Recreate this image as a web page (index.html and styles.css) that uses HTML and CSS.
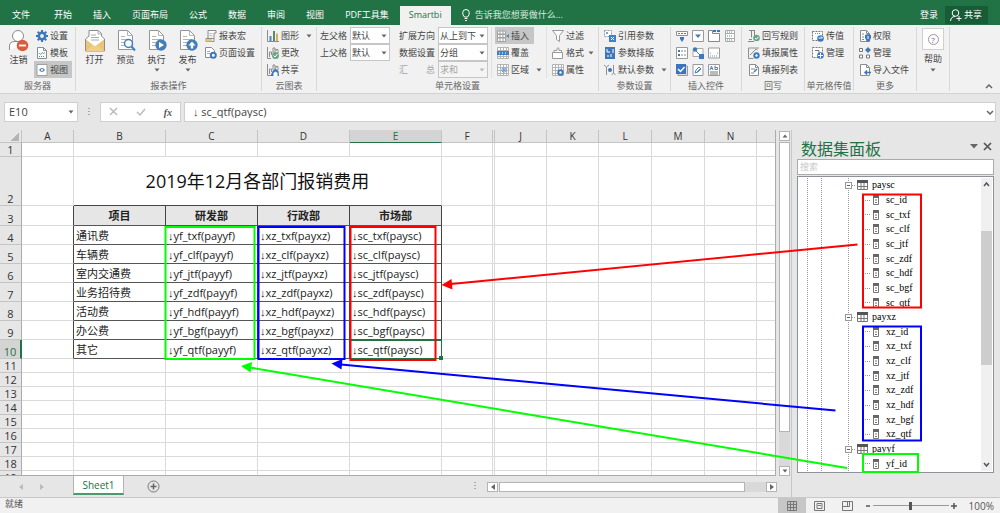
FILE: index.html
```html
<!DOCTYPE html>
<html lang="zh-CN">
<head>
<meta charset="utf-8">
<title>Smartbi - Sheet1</title>
<link rel="stylesheet" href="styles.css">
</head>
<body>
<svg class="defs" aria-hidden="true">
  <symbol id="user" viewBox="0 0 20 22"><circle cx="9" cy="6" r="5.5" fill="#fff" stroke="#8a8a8a"/><path d="M.5 20V16Q.5 11.500 6 11.500H12Q15 11.500 16 14" fill="#fff" stroke="#8a8a8a"/><circle cx="13.500" cy="15.500" r="5.800" fill="#dc5b3c"/><path d="M10 15.500h7" stroke="#fff" stroke-width="1.800"/></symbol>
  <symbol id="gear" viewBox="0 0 12 12"><circle cx="6" cy="6" r="3.200" fill="none" stroke="#3f78ba" stroke-width="2.600"/><path d="M6 0v2M6 10v2M0 6h2M10 6h2M1.700 1.700l1.500 1.500M8.800 8.800l1.500 1.500M1.700 10.300l1.500-1.500M8.800 3.200l1.500-1.500" stroke="#3f78ba" stroke-width="2"/></symbol>
  <symbol id="page" viewBox="0 0 12 12"><path d="M1.500.5h6l3 3v8h-9z" fill="#fff" stroke="#8c8c8c"/><path d="M7.500.5v3h3" fill="none" stroke="#8c8c8c"/></symbol>
  <symbol id="template" viewBox="0 0 12 12"><use href="#page"/><path d="M3 6l1.500 1.500L6 5.500l1.500 1 1.500-1" fill="none" stroke="#65a794"/><path d="M3 9.500h6" stroke="#4c86c6" stroke-dasharray="1 1"/></symbol>
  <symbol id="view" viewBox="0 0 12 12"><path d="M1 .5h10v11H1z" fill="#fff" stroke="#a0a0a0"/><path d="M3 6q3-4 6 0q-3 4-6 0z" fill="#4c86c6"/><circle cx="6" cy="6" r="1.100" fill="#fff"/></symbol>
  <symbol id="open" viewBox="0 0 20 22"><path d="M.5 9L4 6v-5.500h9l3.500 3V6L19.500 9v12H.5z" fill="#fff" stroke="#8c8c8c"/><path d="M13 .5v3.500h3.500M6 5h5M6 7.500h8M6 10h8" fill="none" stroke="#aaa"/><path d="M1 9.500l9 7 9-7v11.500H1z" fill="#eac477"/><path d="M1 21l7-6 2 1.500 2-1.500 7 6" fill="#f1cf89"/></symbol>
  <symbol id="doc" viewBox="0 0 20 22"><path d="M2.500.5h9l5 5v14h-14z" fill="#fff" stroke="#959595"/><path d="M11.500.5v5h5M5 6.500h4M5 9.500h9M5 12.500h8M5 15.500h5" fill="none" stroke="#b4b4b4"/></symbol>
  <symbol id="preview" viewBox="0 0 20 22"><use href="#doc"/><circle cx="12.500" cy="13.500" r="4" fill="#fff" stroke="#3f7fc2" stroke-width="1.500"/><path d="M15.500 16.500l3.500 4" stroke="#3f7fc2" stroke-width="2"/></symbol>
  <symbol id="run" viewBox="0 0 20 22"><use href="#doc"/><circle cx="14" cy="15" r="5.700" fill="#437eb9"/><path d="M12 12v6l5-3z" fill="#fff"/></symbol>
  <symbol id="publish" viewBox="0 0 20 22"><use href="#doc"/><circle cx="14" cy="15" r="5.700" fill="#437eb9"/><path d="M14 11.500l3.500 4h-2.300v3h-2.400v-3h-2.300z" fill="#fff"/></symbol>
  <symbol id="scroll" viewBox="0 0 12 12"><path d="M3 .5h8v2.500H9v5M3 .5v8M9 8v3.500H1V8.500h8" fill="#fff" stroke="#8c8c8c"/><path d="M4.500 3.500h3M4.500 5.500h3" stroke="#e0b774"/><path d="M1 9h6v2.500H1z" fill="#eac477"/></symbol>
  <symbol id="pageset" viewBox="0 0 12 12"><path d="M.5.5h6l3 3v7h-9z" fill="#fff" stroke="#8c8c8c"/><path d="M2 4.500h3M2 6.500h3" stroke="#aaa"/><circle cx="8.300" cy="8.300" r="2.500" fill="#fff" stroke="#3f78ba" stroke-width="2"/></symbol>
  <symbol id="chart" viewBox="0 0 12 12"><path d="M.5 0v11.500H12" fill="none" stroke="#8c8c8c"/><path d="M2.500 6h2v5h-2z" fill="#4c86c6"/><path d="M6 1h2v10H6z" fill="#528b6e"/><path d="M9 3.500h2v7.500H9z" fill="#e0a95b"/></symbol>
  <symbol id="chartb" viewBox="0 0 12 12"><path d="M.5 0v11.500H4M2.500 10V5h2v3M6 6V1h2v4M9 4V2.500h2V6" fill="none" stroke="#8c8c8c"/></symbol>
  <symbol id="chartok" viewBox="0 0 12 12"><use href="#chartb"/><circle cx="8.500" cy="8.500" r="3.500" fill="#6aa588"/><path d="M6.500 8.500l1.500 1.500 2.500-3" fill="none" stroke="#fff"/></symbol>
  <symbol id="chartup" viewBox="0 0 12 12"><use href="#chartb"/><path d="M3.500 12l2-5 3-2.500 3 2.500.5 5z" fill="#3f78ba"/><path d="M6.500 12V9l2-1.500L10.500 9v3" fill="#fff"/></symbol>
  <symbol id="grid" viewBox="0 0 12 12"><path d="M.5.5h11v11H.5zM.5 3.500h11M.5 6.500h11M.5 9.500h11M3.500.5v11M6.500.5v11M9.500.5v11" fill="#fff" stroke="#b4b4b4"/></symbol>
  <symbol id="insert" viewBox="0 0 12 12"><path d="M.5 1h8v3h-8zM.5 4.500h8v3h-8zM.5 8h8v3.500h-8zM3 1v10M6 1v10" fill="#fff" stroke="#a0a0a0"/><path d="M9 6l3-2v4z" fill="#4c86c6"/></symbol>
  <symbol id="cover" viewBox="0 0 12 12"><use href="#grid"/><path d="M0 4h12v4H0z" fill="#4280c4"/><path d="M2 6h8" stroke="#fff" stroke-dasharray="1 2"/></symbol>
  <symbol id="area" viewBox="0 0 12 12"><use href="#grid"/><path d="M5 4l4 4M9 4L5 8M7 3v6M4 6h6" stroke="#6ba3dc"/></symbol>
  <symbol id="prop" viewBox="0 0 12 12"><use href="#grid"/><circle cx="8.500" cy="8.500" r="2.200" fill="#fff" stroke="#3f78ba" stroke-width="2"/></symbol>
  <symbol id="filter" viewBox="0 0 12 12"><path d="M.5.5h11L7.500 5.500v6l-3-2v-4z" fill="#fff" stroke="#999"/></symbol>
  <symbol id="format" viewBox="0 0 12 12"><path d="M.5 5.500h10v6H.5zM2 5.500V3.500h3V1.500Q6 0 7 1.500v2h2.500v2" fill="#fff" stroke="#999"/></symbol>
  <symbol id="ref" viewBox="0 0 12 12"><path d="M.5.500h7v6h-7z" fill="#fff" stroke="#999" stroke-dasharray="2 1"/><path d="M3 2v2M2 3h2" stroke="#4c86c6"/><path d="M5 5h7v7H5z" fill="#4280c4"/><path d="M7 7l3 3M10 7l-3 3" stroke="#fff"/></symbol>
  <symbol id="arrange" viewBox="0 0 12 12"><path d="M1 0h10v12H1z" fill="#3f78ba"/><path d="M3 2v3h3M3 9h2M7 7v3M9 2v4" fill="none" stroke="#fff"/></symbol>
  <symbol id="sliders" viewBox="0 0 12 12"><path d="M2.500 3v8M9.500 1v8M0 1l2.500 2L5 1M7.500 11l2-2 2 2" fill="none" stroke="#909090"/><circle cx="6" cy="6" r="2" fill="#3f78ba"/></symbol>
  <symbol id="c1" viewBox="0 0 12 12"><path d="M.5 1.500h11v4H.5z" fill="#fff" stroke="#909090"/><path d="M2 3.500h8" stroke="#777" stroke-dasharray="2 1"/><path d="M4 7h4v2l-2 3-2-3z" fill="#3f78ba"/></symbol>
  <symbol id="c2" viewBox="0 0 12 12"><path d="M.5.5h11v11H.5z" fill="#fff" stroke="#999"/><path d="M3 4.500h6L6 8z" fill="#3f78ba"/></symbol>
  <symbol id="c3" viewBox="0 0 12 12"><path d="M.5.5h4v3h7v8H.5z" fill="#fff" stroke="#888"/><path d="M5 1h3M9 1h3" stroke="#3f78ba" stroke-width="2"/></symbol>
  <symbol id="c4" viewBox="0 0 12 12"><path d="M1.500.5h9v11h-9zM1.500 3.500h9M1.500 8.500h9" fill="#fff" stroke="#aaa"/><path d="M3 6h6M3 2h6M3 10h6" stroke="#5b86ae" stroke-dasharray="1 1"/></symbol>
  <symbol id="c5" viewBox="0 0 12 12"><path d="M.5.5h11v11H.5z" fill="#fff" stroke="#999"/><path d="M2 4h2M2 8h2" stroke="#3f78ba" stroke-width="2"/><path d="M5 4h5M5 8h5" stroke="#888" stroke-dasharray="2 1"/></symbol>
  <symbol id="c6" viewBox="0 0 12 12"><path d="M2 1.500h9v8H1v-6" fill="#fff" stroke="#aaa"/><circle cx="3" cy="2.500" r="2.200" fill="#3f78ba"/><path d="M7 7h5v5H7z" fill="#3f78ba"/><path d="M4 4l4 4" stroke="#3f78ba"/></symbol>
  <symbol id="c7" viewBox="0 0 12 12"><path d="M.5 1h11v10H.5z" fill="#fff" stroke="#999"/><path d="M2 6h1M9 6h1M2 9h8" stroke="#7293b3" stroke-dasharray="1 1"/></symbol>
  <symbol id="c8" viewBox="0 0 12 12"><path d="M2 2h9.500v9.500H2z" fill="#ddd" stroke="#999"/><path d="M0 0h10v10H0z" fill="#3a74bc"/><path d="M2 5l2.500 2.500L8.500 3" fill="none" stroke="#fff" stroke-width="1.500"/></symbol>
  <symbol id="c9" viewBox="0 0 12 12"><path d="M1 .5h10v11H1z" fill="#fff" stroke="#999"/><path d="M3 9l1-3 3-3 2 2-3 3zM5 8l3-3" fill="none" stroke="#4c86c6"/></symbol>
  <symbol id="c10" viewBox="0 0 12 12"><path d="M.5.5h11v11H.5z" fill="#fff" stroke="#999"/><path d="M2 6l1.500-4L5 6M2.500 4.500h2M7 1.500v4h2.500v-2H7" fill="none" stroke="#4c86c6"/><path d="M2 8h8M2 10h8" stroke="#777"/></symbol>
  <symbol id="rule" viewBox="0 0 12 12"><path d="M1 .5h6M3.500.5v7M6.500.5v6M0 11.500h6M1 9.500h3" fill="none" stroke="#888"/><circle cx="8.500" cy="8" r="3.300" fill="#6aa588"/><path d="M7 8l1.300 1.300L10.300 6.800" fill="none" stroke="#fff"/></symbol>
  <symbol id="fillp" viewBox="0 0 12 12"><path d="M11 1H.5v10.500h5M2 8l6-6 1.500 1" fill="none" stroke="#909090"/><circle cx="8.500" cy="8.500" r="2.200" fill="#fff" stroke="#3f78ba" stroke-width="2"/></symbol>
  <symbol id="filll" viewBox="0 0 12 12"><use href="#page"/><path d="M3 5h4M3 9h3" stroke="#888"/><path d="M6 8l3-3" stroke="#3f78ba" stroke-width="1.500"/></symbol>
  <symbol id="pass" viewBox="0 0 12 12"><path d="M.5 1.500h10v9H.5z" fill="#fff" stroke="#777" stroke-dasharray="2 1"/><path d="M3 3.500h6" stroke="#888" stroke-dasharray="1 1"/><circle cx="8.500" cy="8.500" r="3.300" fill="#3f78ba"/><path d="M6.500 8h4L9 6.500" fill="none" stroke="#fff"/></symbol>
  <symbol id="passm" viewBox="0 0 12 12"><path d="M.5.500h10v10H.5z" fill="#fff" stroke="#777" stroke-dasharray="2 1"/><path d="M3 3.500h4v3" fill="none" stroke="#777"/><circle cx="8.500" cy="8.500" r="3.300" fill="#3f78ba"/><path d="M6 8.500h5M8.500 6v5" stroke="#fff"/></symbol>
  <symbol id="perm" viewBox="0 0 12 12"><use href="#page"/><path d="M3 4h2M3 7h2M3 9.500h2" stroke="#888"/><path d="M6 5l3-1 3 1v3q-1 3-3 4q-2-1-3-4z" fill="#3f78ba"/><path d="M9 6v3" stroke="#fff"/></symbol>
  <symbol id="mod" viewBox="0 0 12 12"><path d="M.5 1.500h3v3h-3zM.5 8h3v3h-3zM7.500 8h3v3h-3z" fill="#fff" stroke="#777"/><path d="M9 0l3 3-3 3-3-3z" fill="#3f78ba"/></symbol>
  <symbol id="import" viewBox="0 0 12 12"><use href="#page"/><path d="M12 8.500H6M8 6.500l-2 2 2 2" fill="none" stroke="#3f78ba" stroke-width="1.500"/></symbol>
  <symbol id="tri" viewBox="0 0 6 4"><path d="M.5.500h5L3 3.500z" fill="#666"/></symbol>
  <symbol id="tbl" viewBox="0 0 11 10"><path d="M.5.500h10v9H.5zM.5 6.500h10M4 3v7M7 3v7" fill="#fff" stroke="#777"/><path d="M0 0h11v3H0z" fill="#555"/></symbol>
  <symbol id="fld" viewBox="0 0 6 10"><path d="M.5.500h5v9h-5zM2 5h2M2 7.500h2" fill="#fff" stroke="#777"/><path d="M0 0h6v3H0z" fill="#666"/></symbol>
</svg>

<header class="tabs">
  <nav class="tab-list">
    <button class="tab file">文件</button><button class="tab">开始</button><button class="tab">插入</button><button class="tab">页面布局</button><button class="tab">公式</button><button class="tab">数据</button><button class="tab">审阅</button><button class="tab">视图</button><button class="tab">PDF工具集</button><button class="tab active">Smartbi</button>
    <button class="tab tell"><svg width="8" height="12" viewBox="0 0 8 12"><path d="M2.500 8Q.5 6 .7 3.800A3.300 3.300 0 0 1 7.300 3.800Q7.500 6 5.500 8zM2.500 9.500h3M3 11.500h2" fill="none" stroke="#fff"/></svg>告诉我您想要做什么...</button>
  </nav>
  <a class="login" href="#">登录</a>
  <button class="share"><svg width="12" height="12" viewBox="0 0 12 12"><circle cx="5.500" cy="4" r="3.300" fill="none" stroke="#fff"/><path d="M.5 12Q1 7.500 5 7.500M9 7v5M6.500 9.500h5" fill="none" stroke="#fff"/></svg>共享</button>
</header>

<section class="ribbon">
  <div class="group g1"><div class="tools">
    <button class="big"><svg><use href="#user"/></svg>注销</button>
    <div class="stack"><button class="small"><svg><use href="#gear"/></svg>设置</button><button class="small"><svg><use href="#template"/></svg>模板</button><button class="small on"><svg><use href="#view"/></svg>视图</button></div>
  </div><h2>服务器</h2></div>
  <div class="group g2"><div class="tools">
    <button class="big"><svg><use href="#open"/></svg>打开</button><button class="big"><svg><use href="#preview"/></svg>预览</button><button class="big"><svg><use href="#run"/></svg>执行<svg class="caret"><use href="#tri"/></svg></button><button class="big"><svg><use href="#publish"/></svg>发布<svg class="caret"><use href="#tri"/></svg></button>
    <div class="stack"><button class="small"><svg><use href="#scroll"/></svg>报表宏</button><button class="small"><svg><use href="#pageset"/></svg>页面设置</button></div>
  </div><h2>报表操作</h2></div>
  <div class="group g3"><div class="tools"><div class="stack"><button class="small">
    <svg><use href="#chart"/></svg>图形<svg class="caret far"><use href="#tri"/></svg></button><button class="small"><svg><use href="#chartok"/></svg>更改</button><button class="small"><svg><use href="#chartup"/></svg>共享</button></div>
  </div><h2>云图表</h2></div>
  <div class="group g4"><div class="tools">
    <div class="fields parents">
      <label for="lp">左父格</label><span class="pick"><select id="lp"><option>默认</option></select><svg class="caret"><use href="#tri"/></svg></span>
      <label for="tp">上父格</label><span class="pick"><select id="tp"><option>默认</option></select><svg class="caret"><use href="#tri"/></svg></span>
    </div>
    <div class="fields expand">
      <label for="dir">扩展方向</label><span class="pick"><select id="dir"><option>从上到下</option></select><svg class="caret"><use href="#tri"/></svg></span>
      <label for="data">数据设置</label><span class="pick"><select id="data"><option>分组</option></select><svg class="caret"><use href="#tri"/></svg></span>
      <label for="sum" class="off">汇　　总</label><span class="pick off"><select id="sum" disabled><option>求和</option></select><svg class="caret"><use href="#tri"/></svg></span>
    </div>
    <div class="stack ruled"><button class="small on"><svg><use href="#insert"/></svg>插入</button><button class="small"><svg><use href="#cover"/></svg>覆盖</button><button class="small"><svg><use href="#area"/></svg>区域<svg class="caret far"><use href="#tri"/></svg></button></div>
    <div class="stack ruled"><button class="small"><svg><use href="#filter"/></svg>过滤</button><button class="small"><svg><use href="#format"/></svg>格式<svg class="caret"><use href="#tri"/></svg></button><button class="small"><svg><use href="#prop"/></svg>属性</button></div>
  </div><h2>单元格设置</h2></div>
  <div class="group g5"><div class="tools"><div class="stack"><button class="small"><svg><use href="#ref"/></svg>引用参数</button><button class="small"><svg><use href="#arrange"/></svg>参数排版</button><button class="small"><svg><use href="#sliders"/></svg>默认参数<svg class="caret far"><use href="#tri"/></svg></button></div></div><h2>参数设置</h2></div>
  <div class="group g6"><div class="tools controls">
    <button aria-label="按钮"><svg><use href="#c1"/></svg></button><button aria-label="下拉框"><svg><use href="#c2"/></svg></button><button aria-label="选项卡"><svg><use href="#c3"/></svg></button><button aria-label="日期"><svg><use href="#c4"/></svg></button>
    <button aria-label="列表"><svg><use href="#c5"/></svg></button><button aria-label="树"><svg><use href="#c6"/></svg></button><button aria-label="文本框"><svg><use href="#c7"/></svg></button><span></span>
    <button aria-label="复选框"><svg><use href="#c8"/></svg></button><button aria-label="附件"><svg><use href="#c9"/></svg></button><button aria-label="多行文本"><svg><use href="#c10"/></svg></button>
  </div><h2>插入控件</h2></div>
  <div class="group g7"><div class="tools"><div class="stack"><button class="small"><svg><use href="#rule"/></svg>回写规则</button><button class="small"><svg><use href="#fillp"/></svg>填报属性</button><button class="small"><svg><use href="#filll"/></svg>填报列表</button></div></div><h2>回写</h2></div>
  <div class="group g8"><div class="tools"><div class="stack"><button class="small"><svg><use href="#pass"/></svg>传值</button><button class="small"><svg><use href="#passm"/></svg>管理</button></div></div><h2>单元格传值</h2></div>
  <div class="group g9"><div class="tools"><div class="stack"><button class="small"><svg><use href="#perm"/></svg>权限</button><button class="small"><svg><use href="#mod"/></svg>管理</button><button class="small"><svg><use href="#import"/></svg>导入文件</button></div></div><h2>更多</h2></div>
  <div class="group g10"><button class="help"><span class="help-box"><span class="q">?</span></span>帮助<svg class="caret"><use href="#tri"/></svg></button></div>
  <button class="collapse" aria-label="折叠功能区"><svg width="8" height="5" viewBox="0 0 8 5"><path d="M1 4l3-3 3 3" fill="none" stroke="#666" stroke-width="1.500"/></svg></button>
</section>

<section class="formula">
  <div class="namebox"><input aria-label="名称框" value="E10"><svg class="caret"><use href="#tri"/></svg></div>
  <span class="grip"></span>
  <div class="fx"><button aria-label="取消"><svg width="10" height="10" viewBox="0 0 10 10"><path d="M1 1l7 7M8 1L1 8" stroke="#bbb" stroke-width="1.500"/></svg></button><button aria-label="输入"><svg width="10" height="10" viewBox="0 0 10 10"><path d="M1 5l3 3 5-6" fill="none" stroke="#bbb" stroke-width="1.500"/></svg></button><button class="fn">fx</button></div>
  <div class="content"><input aria-label="编辑栏" value="↓ sc_qtf(paysc)"><svg width="8" height="5" viewBox="0 0 8 5"><path d="M1 1l3 3 3-3" fill="none" stroke="#666" stroke-width="1.500"/></svg></div>
</section>

<main class="work">
  <section class="book">
    <div class="pane">
      <div class="gridwrap">
        <table class="sheet">
          <colgroup><col class="rh"><col class="n"><col class="w"><col class="w"><col class="w"><col class="w"><col class="f"><col class="hid"><col class="n"><col class="n"><col class="m"><col class="m"><col class="n"><col class="m"></colgroup>
          <thead><tr><th class="corner"></th><th>A</th><th>B</th><th>C</th><th>D</th><th class="sel">E</th><th>F</th><th></th><th>J</th><th>K</th><th>L</th><th>M</th><th>N</th><th></th></tr></thead>
          <tbody>
            <tr><th>1</th><td></td><td></td><td></td><td></td><td></td><td></td><td></td><td></td><td></td><td></td><td></td><td></td><td></td></tr>
            <tr class="title"><th>2</th><td></td><td colspan="4">2019年12月各部门报销费用</td><td></td><td></td><td></td><td></td><td></td><td></td><td></td><td></td></tr>
            <tr class="head"><th>3</th><td></td><td>项目</td><td>研发部</td><td>行政部</td><td>市场部</td><td></td><td></td><td></td><td></td><td></td><td></td><td></td><td></td></tr>
            <tr class="row"><th>4</th><td></td><td>通讯费</td><td>↓yf_txf(payyf)</td><td>↓xz_txf(payxz)</td><td>↓sc_txf(paysc)</td><td></td><td></td><td></td><td></td><td></td><td></td><td></td><td></td></tr>
            <tr class="row"><th>5</th><td></td><td>车辆费</td><td>↓yf_clf(payyf)</td><td>↓xz_clf(payxz)</td><td>↓sc_clf(paysc)</td><td></td><td></td><td></td><td></td><td></td><td></td><td></td><td></td></tr>
            <tr class="row"><th>6</th><td></td><td>室内交通费</td><td>↓yf_jtf(payyf)</td><td>↓xz_jtf(payxz)</td><td>↓sc_jtf(paysc)</td><td></td><td></td><td></td><td></td><td></td><td></td><td></td><td></td></tr>
            <tr class="row"><th>7</th><td></td><td>业务招待费</td><td>↓yf_zdf(payyf)</td><td>↓xz_zdf(payxz)</td><td>↓sc_zdf(paysc)</td><td></td><td></td><td></td><td></td><td></td><td></td><td></td><td></td></tr>
            <tr class="row"><th>8</th><td></td><td>活动费</td><td>↓yf_hdf(payyf)</td><td>↓xz_hdf(payxz)</td><td>↓sc_hdf(paysc)</td><td></td><td></td><td></td><td></td><td></td><td></td><td></td><td></td></tr>
            <tr class="row"><th>9</th><td></td><td>办公费</td><td>↓yf_bgf(payyf)</td><td>↓xz_bgf(payxz)</td><td>↓sc_bgf(paysc)</td><td></td><td></td><td></td><td></td><td></td><td></td><td></td><td></td></tr>
            <tr class="row"><th class="sel">10</th><td></td><td>其它</td><td>↓yf_qtf(payyf)</td><td>↓xz_qtf(payxz)</td><td class="cursor">↓sc_qtf(paysc)</td><td></td><td></td><td></td><td></td><td></td><td></td><td></td><td></td></tr>
            <tr><th>11</th><td></td><td></td><td></td><td></td><td></td><td></td><td></td><td></td><td></td><td></td><td></td><td></td><td></td></tr>
            <tr><th>12</th><td></td><td></td><td></td><td></td><td></td><td></td><td></td><td></td><td></td><td></td><td></td><td></td><td></td></tr>
            <tr><th>13</th><td></td><td></td><td></td><td></td><td></td><td></td><td></td><td></td><td></td><td></td><td></td><td></td><td></td></tr>
            <tr><th>14</th><td></td><td></td><td></td><td></td><td></td><td></td><td></td><td></td><td></td><td></td><td></td><td></td><td></td></tr>
            <tr><th>15</th><td></td><td></td><td></td><td></td><td></td><td></td><td></td><td></td><td></td><td></td><td></td><td></td><td></td></tr>
            <tr><th>16</th><td></td><td></td><td></td><td></td><td></td><td></td><td></td><td></td><td></td><td></td><td></td><td></td><td></td></tr>
            <tr><th>17</th><td></td><td></td><td></td><td></td><td></td><td></td><td></td><td></td><td></td><td></td><td></td><td></td><td></td></tr>
            <tr><th>18</th><td></td><td></td><td></td><td></td><td></td><td></td><td></td><td></td><td></td><td></td><td></td><td></td><td></td></tr>
            <tr><th>19</th><td></td><td></td><td></td><td></td><td></td><td></td><td></td><td></td><td></td><td></td><td></td><td></td><td></td></tr>
          </tbody>
        </table>
      </div>
      <div class="vscroll"><button aria-label="向上"><svg width="6" height="4" class="flip"><use href="#tri"/></svg></button><div class="thumb"></div><div class="track"></div><button aria-label="向下"><svg width="6" height="4"><use href="#tri"/></svg></button></div>
    </div>
    <div class="sheetbar">
      <div class="navs"><svg width="4" height="6" viewBox="0 0 4 6"><path d="M4 0v6L0 3z" fill="#bbb"/></svg><svg width="4" height="6" viewBox="0 0 4 6"><path d="M0 0v6l4-3z" fill="#bbb"/></svg></div>
      <button class="sheettab">Sheet1</button>
      <button class="add" aria-label="新工作表"><svg width="13" height="13" viewBox="0 0 13 13"><circle cx="6.500" cy="6.500" r="5.500" fill="none" stroke="#777"/><path d="M3.500 6.500h6M6.500 3.500v6" stroke="#666" stroke-width="1.500"/></svg></button>
      <span class="grip"></span>
      <div class="hscroll"><button aria-label="向左"><svg width="4" height="6" viewBox="0 0 4 6"><path d="M4 0v6L0 3z" fill="#666"/></svg></button><div class="thumb"></div><div class="track"></div><button aria-label="向右"><svg width="4" height="6" viewBox="0 0 4 6"><path d="M0 0v6l4-3z" fill="#666"/></svg></button></div>
    </div>
  </section>
  <aside class="panel">
    <header><h1>数据集面板</h1><button aria-label="选项"><svg width="8" height="5" viewBox="0 0 8 5"><path d="M0 0h8L4 4.500z" fill="#666"/></svg></button><button aria-label="关闭"><svg width="9" height="9" viewBox="0 0 9 9"><path d="M1 1l7 7M8 1L1 8" stroke="#555" stroke-width="1.700"/></svg></button></header>
    <input class="search" aria-label="搜索" placeholder="搜索">
    <div class="treebox">
      <ul class="tree">
        <li class="ds"><i></i><svg><use href="#tbl"/></svg>paysc</li>
        <li><svg><use href="#fld"/></svg>sc_id</li><li><svg><use href="#fld"/></svg>sc_txf</li><li><svg><use href="#fld"/></svg>sc_clf</li><li><svg><use href="#fld"/></svg>sc_jtf</li><li><svg><use href="#fld"/></svg>sc_zdf</li><li><svg><use href="#fld"/></svg>sc_hdf</li><li><svg><use href="#fld"/></svg>sc_bgf</li><li><svg><use href="#fld"/></svg>sc_qtf</li>
        <li class="ds"><i></i><svg><use href="#tbl"/></svg>payxz</li>
        <li><svg><use href="#fld"/></svg>xz_id</li><li><svg><use href="#fld"/></svg>xz_txf</li><li><svg><use href="#fld"/></svg>xz_clf</li><li><svg><use href="#fld"/></svg>xz_jtf</li><li><svg><use href="#fld"/></svg>xz_zdf</li><li><svg><use href="#fld"/></svg>xz_hdf</li><li><svg><use href="#fld"/></svg>xz_bgf</li><li><svg><use href="#fld"/></svg>xz_qtf</li>
        <li class="ds"><i></i><svg><use href="#tbl"/></svg>payyf</li>
        <li><svg><use href="#fld"/></svg>yf_id</li>
      </ul>
      <div class="treescroll"><svg width="7" height="5" viewBox="0 0 7 5"><path d="M1 4l2.500-3L6 4" fill="none" stroke="#555" stroke-width="1.500"/></svg><div class="thumb"></div><svg width="7" height="5" viewBox="0 0 7 5"><path d="M1 1l2.500 3L6 1" fill="none" stroke="#555" stroke-width="1.500"/></svg></div>
    </div>
  </aside>
</main>

<footer class="status">
  <span class="ready">就绪</span>
  <button class="on" aria-label="普通"><svg width="10" height="10" viewBox="0 0 10 10"><path d="M.5.500h9v9h-9zM.5 3.500h9M.5 6.500h9M3.500.5v9M6.500.5v9" fill="none" stroke="#777"/></svg></button>
  <button aria-label="页面布局"><svg width="11" height="10" viewBox="0 0 11 10"><path d="M.5.500h10v9H.5zM3 2.500h5v5H3zM4 4.500h3" fill="none" stroke="#777"/></svg></button>
  <button aria-label="分页预览"><svg width="11" height="10" viewBox="0 0 11 10"><path d="M.5.500h10v9H.5zM5.500.5v5M.5 5.500h7V.5" fill="none" stroke="#777"/></svg></button>
  <span class="zoom"><button aria-label="缩小"><svg width="6" height="6" viewBox="0 0 6 6"><path d="M1 3h4" stroke="#555" stroke-width="1.500"/></svg></button><input type="range" aria-label="缩放" min="0" max="100" value="50"><button aria-label="放大"><svg width="6" height="6" viewBox="0 0 6 6"><path d="M0 3h6M3 0v6" stroke="#555" stroke-width="1.500"/></svg></button><span class="pct">100%</span></span>
</footer>

<svg class="notes" width="1000" height="513" viewBox="0 0 1000 513" aria-hidden="true">
  <g fill="none" stroke="#0f0" stroke-width="2"><path d="M165.500 227h89v132h-89zM863 454h55v18h-55z"/><path d="M847 468L250 367.500"/></g>
  <path d="M241 366l11-4-1.500 10.500z" fill="#0f0"/>
  <g fill="none" stroke="#00f" stroke-width="2"><path d="M258.500 227h86v132h-86zM863 326.500h58v114h-58z"/><path d="M835.500 410.500L341 364.500"/></g>
  <path d="M331.500 363.500l11-4.500-1 10.500z" fill="#00f"/>
  <g fill="none" stroke="red" stroke-width="2"><path d="M350.500 227h85v133h-85zM863 194.500h58v113h-58z"/><path d="M857.500 244.500L451 284"/></g>
  <path d="M441.500 285l10-6 1 10.500z" fill="red"/>
</svg>
</body>
</html>
```
FILE: styles.css
```css
* { box-sizing: border-box; }
body {
  margin: 0; min-height: 100vh; display: flex; flex-direction: column;
  position: relative; overflow: hidden; background: #e6e6e6; color: #444;
  font: 9px/12px "Open Sans", "Liberation Sans", "Noto Sans CJK SC", sans-serif;
}
button, input, select { font: inherit; color: inherit; border: 0; padding: 0; margin: 0; background: none; border-radius: 0; min-width: 0; }
button { display: flex; align-items: center; white-space: nowrap; }
svg { display: block; flex: none; }
.defs { position: absolute; width: 0; height: 0; }
.caret { width: 6px; height: 4px; }

.tabs { display: flex; align-items: flex-end; height: 25px; background: #217346; color: #fff; padding-right: 12px; }
.tab-list { display: flex; flex: 1; gap: 1px; padding-left: 2px; }
.tab { height: 19px; padding: 0 10px 2px; }
.file { margin-right: 3px; }
.tab.active { background: #f1f1f1; color: #217346; padding: 0 9px 2px; }
.tell { gap: 5px; color: #d8e8df; }
.login { color: #fff; text-decoration: none; height: 19px; line-height: 17px; margin-right: 7px; }
.share { height: 18px; margin-bottom: 1px; padding: 0 6px 0 5px; gap: 2px; background: #185c37; }

.ribbon { display: flex; height: 69px; padding-top: 2px; background: #f1f1f1; border-bottom: 1px solid #d2d2d2; }
.group { display: flex; flex-direction: column; position: relative; border-right: 1px solid #d8d8d8; height: 64px; flex: none; }
.tools { display: flex; height: 51px; flex: none; }
.group h2 { margin: 0; flex: none; font-size: 9px; line-height: 15px; font-weight: 400; text-align: center; color: #666; white-space: nowrap; }
.g1 { width: 76px; } .g2 { width: 186px; } .g3 { width: 55px; } .g4 { width: 282px; } .g5 { width: 72px; }
.g6 { width: 71px; } .g7 { width: 63px; } .g8 { width: 49px; } .g9 { width: 63px; } .g10 { width: 33px; }
.big { flex-direction: column; width: 31px; padding-top: 3px; line-height: 12px; }
.big > svg:first-child { width: 20px; height: 22px; margin-bottom: 2px; }
.big .caret { margin-top: 2px; }
.small { height: 17px; gap: 2px; padding: 0 2px; }
.small > svg:first-child { width: 12px; height: 12px; }
.small .caret { margin-left: 2px; }
.small .far { margin-left: 5px; }
.on { background: #c6c6c6; }
.g1 .tools { padding-left: 3px; }
.g1 .stack { width: 38px; }
.g1 .on, .ruled .on { width: 100%; }
.g2 .tools { padding-left: 3px; }
.g3 .tools, .g5 .tools, .g9 .tools { padding-left: 3px; }
.g7 .tools { padding-left: 4px; }
.g8 .tools { padding-left: 5px; }
.fields { display: grid; grid-auto-rows: 17px; align-items: center; align-content: start; white-space: nowrap; }
.parents { grid-template-columns: 30px 40px; margin-left: 3px; }
.expand { grid-template-columns: 39px 50px; margin-left: 9px; }
.pick { display: flex; align-items: center; height: 17px; background: #fff; border: 1px solid #c6c6c6; padding-right: 2px; }
.pick select { flex: 1; appearance: none; height: 15px; padding-left: 1px; overflow: hidden; }
.off { color: #a6a6a6; }
.pick.off { background: #f4f4f4; }
.pick.off .caret { opacity: .4; }
.pick select:disabled { color: #a6a6a6; opacity: 1; }
.ruled { border-left: 1px solid #e0e0e0; padding-left: 3px; margin-left: 3px; width: 52px; }
.ruled .on { width: 39px; }
.controls { display: grid; grid-template-columns: repeat(4, 16px); grid-auto-rows: 17px; padding-left: 5px; }
.controls svg { width: 12px; height: 12px; }
.help { flex-direction: column; line-height: 14px; }
.help-box { display: flex; align-items: center; justify-content: center; width: 22px; height: 22px; margin: 1px 0 2px; background: #fdfdfd; border: 1px solid #d0d0d0; }
.q { width: 11px; height: 11px; line-height: 9px; font-size: 8px; border: 1px solid #999; border-radius: 50%; color: #8a4db8; }
.help .caret { margin-top: 2px; }
.collapse { margin: auto 7px 4px auto; }

.formula { display: flex; align-items: center; gap: 3px; padding: 0 4px; height: 36px; font-size: 11px; }
.namebox, .fx, .content { display: flex; align-items: center; height: 20px; background: #fff; border: 1px solid #d0d0d0; }
.namebox { width: 74px; padding: 0 3px 0 4px; }
.namebox input { flex: 1; }
.grip { width: 2px; height: 9px; margin: 0 8px; background: repeating-linear-gradient(#aaa 0 1px, transparent 1px 3px); }
.formula .grip { margin: 0 7px; }
.fx { width: 81px; justify-content: space-between; padding: 0 8px; }
.fn { font: italic 700 10px "Liberation Serif", serif; color: #555; }
.content { flex: 1; padding: 0 1px 0 8px; }
.content input { flex: 1; }

.work { display: flex; flex: 1; min-height: 0; }
.book { flex: 1; min-width: 0; display: flex; flex-direction: column; }
.pane { display: flex; flex: 1; min-height: 0; }
.gridwrap { flex: 1; height: 346px; overflow: hidden; border-right: 1px solid #ababab; border-bottom: 1px solid #ababab; }
.sheet { table-layout: fixed; width: 809px; border-collapse: separate; border-spacing: 0; background: #fff; color: #222; }
.rh { width: 22px; } .n { width: 52px; } .f { width: 51px; } .w { width: 92px; } .m { width: 53px; } .hid { width: 2px; }
.sheet th, .sheet td { padding: 0; height: 14px; border: solid #dadada; border-width: 0 1px 1px 0; overflow: hidden; white-space: nowrap; line-height: 13px; }
.sheet th { background: #e6e6e6; font-weight: 400; font-size: 10px; vertical-align: bottom; border-color: #c4c4c4; color: #333; }
.sheet thead th { height: 13px; line-height: 12px; }
.sheet tbody th { border-right-color: #ababab; font-size: 11px; line-height: 12px; }
.sheet thead .sel { color: #217346; background: #d4d4d4; border-bottom-color: #217346; }
.sheet tbody .sel { color: #217346; background: #d4d4d4; border-right: 2px solid #217346; }
.sheet .corner { background: linear-gradient(135deg, transparent 50%, #b4b4b4 50%) 11px 3px / 8px 8px no-repeat #e6e6e6; }
.sheet .title > * { height: 49px; }
.sheet .title td:nth-child(3) { font-size: 18px; line-height: 24px; text-align: center; border-bottom-color: #444; color: #111; }
.sheet .head > * { height: 20px; }
.sheet .head td:nth-child(n+3):nth-child(-n+6) { background: #e6e6e6; text-align: center; font-weight: 700; font-size: 11px; }
.sheet .row > * { height: 19px; }
.sheet .row td { font-size: 11px; line-height: 17px; padding-left: 2px; }
.sheet .row td:nth-child(-n+2), .sheet .row td:nth-child(n+7) { padding: 0; }
.sheet .head td:nth-child(n+2):nth-child(-n+6), .sheet .row td:nth-child(n+2):nth-child(-n+6) { border-right-color: #444; }
.sheet .head td:nth-child(n+3):nth-child(-n+6), .sheet .row td:nth-child(n+3):nth-child(-n+6) { border-bottom-color: #555; }
.sheet .row td.cursor:nth-child(n+3):nth-child(-n+6) { position: relative; overflow: visible; border-color: #217346; box-shadow: inset 1px 1px #217346; }
.cursor::after { content: ""; position: absolute; right: -2px; bottom: -2px; width: 4px; height: 4px; background: #217346; }
.vscroll { width: 11px; margin: 1px 1px 0 3px; display: flex; flex-direction: column; }
.vscroll button, .hscroll button { width: 11px; height: 10px; flex: none; justify-content: center; background: #fff; border: 1px solid #b4b4b4; }
.vscroll .thumb { flex: 291; background: #fff; border: 1px solid #b4b4b4; margin-top: 1px; }
.vscroll .track { flex: 34; background: #d9d9d9; }
.flip { transform: rotate(180deg); }
.sheetbar { display: flex; height: 21px; align-items: center; }
.navs { display: flex; width: 73px; gap: 17px; padding-left: 19px; }
.sheettab { align-self: flex-start; width: 51px; height: 19px; justify-content: center; background: #fff; color: #217346; border: solid #b4b4b4; border-width: 0 1px; border-bottom: 2px solid #4a9a70; font-size: 10px; }
.add { margin: 0 auto 0 23px; }
.hscroll { display: flex; width: 290px; margin: 0 14px 0 3px; }
.hscroll .thumb { flex: 247; background: #fff; border: 1px solid #b4b4b4; margin-left: 1px; }
.hscroll .track { flex: 21; background: #d9d9d9; }

.panel { width: 209px; border-left: 1px solid #c8c8c8; padding: 8px 6px 24px 5px; display: flex; flex-direction: column; }
.panel header { display: flex; align-items: center; gap: 5px; height: 21px; padding: 0 2px 0 4px; }
.panel header button { margin-bottom: 4px; }
.panel h1 { margin: 0; flex: 1; font-size: 16px; line-height: 20px; font-weight: 400; color: #217346; }
.search { height: 16px; background: #fff; border: 1px solid #ababab; padding: 0 2px 2px; margin-bottom: 1px; }
.search::placeholder { color: #c8c8c8; opacity: 1; }
.treebox { display: flex; flex: 1; background: #fff; border: 1px solid #8d929a; padding: 1px; }
.tree {
  list-style: none; margin: 0; padding: 0; flex: 1; display: grid; grid-auto-rows: 1fr;
  font: 10px/12px "Liberation Serif", serif; color: #000;
  background: repeating-linear-gradient(transparent 0 1px, #fff 1px 2px), linear-gradient(90deg, transparent 8px, #999 8px 9px, transparent 9px 22px, #999 22px 23px, transparent 23px 49px, #999 49px 50px, transparent 50px);
}
.tree li { display: flex; align-items: center; padding-left: 74px; gap: 7px; background: repeating-linear-gradient(90deg, #999 0 1px, transparent 1px 2px) 64px 7px / 8px 1px no-repeat; }
.tree li svg { width: 6px; height: 10px; }
.tree .ds { padding-left: 46px; gap: 4px; background-position: 53px 7px; background-size: 4px 1px; }
.tree .ds svg { width: 11px; }
.tree i { width: 7px; height: 7px; margin-right: 1px; border: 1px solid #999; background: linear-gradient(#467, #467) 1px 2px / 3px 1px no-repeat #fff; }
.treescroll { width: 11px; display: flex; flex-direction: column; align-items: center; background: #f0f0f0; padding: 4px 0; }
.treescroll .thumb { width: 11px; height: 134px; margin: 44px 0 auto; background: #cdcdcd; }

.status { display: flex; height: 16px; align-items: stretch; background: #f1f1f1; border-top: 1px solid #c8c8c8; color: #555; }
.ready { margin-right: auto; padding-left: 5px; }
.status > button { width: 28px; justify-content: center; }
.zoom { display: flex; align-items: center; gap: 2px; padding: 0 6px 0 3px; }
.zoom input { width: 76px; height: 12px; appearance: none; background: linear-gradient(#999, #999) center / 100% 1px no-repeat; }
.zoom input::-webkit-slider-thumb { appearance: none; width: 3px; height: 8px; background: #555; }
.pct { margin-left: 10px; font-size: 10px; }
.notes { position: absolute; left: 0; top: 0; pointer-events: none; }
```
